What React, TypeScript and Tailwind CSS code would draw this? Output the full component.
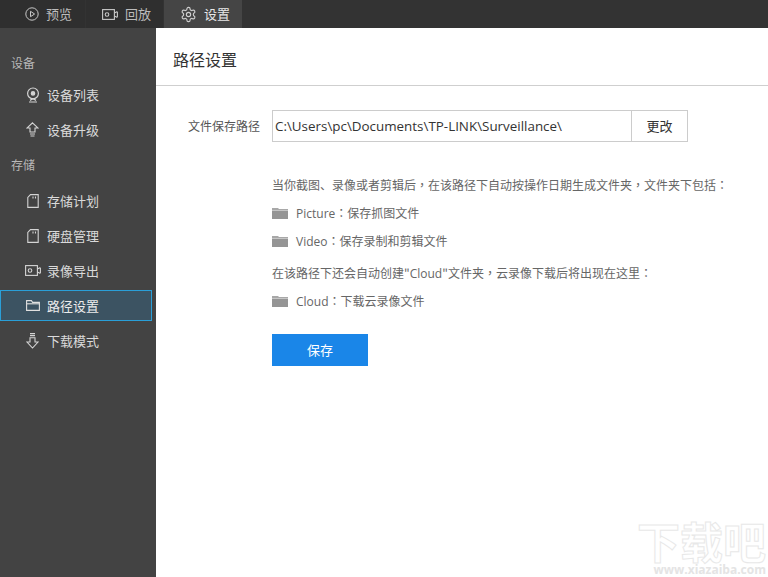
import React from "react";

const FONT = '"Noto Sans CJK SC", "Open Sans", sans-serif';

function Play() {
  return (
    <svg width="14" height="14" viewBox="0 0 14 14" fill="none" stroke="#c8c8c8" strokeWidth="1">
      <circle cx="7" cy="7" r="6.2" />
      <path d="M5.5 4.3 L9.6 7 L5.5 9.7 Z" />
    </svg>
  );
}
function Cam({ color = "#c8c8c8" }: { color?: string }) {
  return (
    <svg width="16" height="11" viewBox="0 0 16 11" fill="none" stroke={color} strokeWidth="1.1">
      <rect x="0.6" y="0.6" width="11.8" height="9.8" />
      <circle cx="5" cy="5.5" r="1.8" />
      <path d="M12.4 4 L15.4 2.4 M12.4 7 L15.4 8.6 M15.4 3v5" />
    </svg>
  );
}
function Gear() {
  return (
    <svg width="17" height="17" viewBox="0 0 24 24" fill="none" stroke="#d0d0d0" strokeWidth="1.6" strokeLinecap="round" strokeLinejoin="round">
      <path d="M12.22 2h-.44a2 2 0 0 0-2 2v.18a2 2 0 0 1-1 1.73l-.43.25a2 2 0 0 1-2 0l-.15-.08a2 2 0 0 0-2.73.73l-.22.38a2 2 0 0 0 .73 2.73l.15.1a2 2 0 0 1 1 1.72v.51a2 2 0 0 1-1 1.74l-.15.09a2 2 0 0 0-.73 2.73l.22.38a2 2 0 0 0 2.73.73l.15-.08a2 2 0 0 1 2 0l.43.25a2 2 0 0 1 1 1.73V20a2 2 0 0 0 2 2h.44a2 2 0 0 0 2-2v-.18a2 2 0 0 1 1-1.73l.43-.25a2 2 0 0 1 2 0l.15.08a2 2 0 0 0 2.73-.73l.22-.39a2 2 0 0 0-.73-2.73l-.15-.08a2 2 0 0 1-1-1.74v-.5a2 2 0 0 1 1-1.74l.15-.09a2 2 0 0 0 .73-2.73l-.22-.38a2 2 0 0 0-2.73-.73l-.15.08a2 2 0 0 1-2 0l-.43-.25a2 2 0 0 1-1-1.73V4a2 2 0 0 0-2-2z" />
      <circle cx="12" cy="12" r="3" />
    </svg>
  );
}
function Pin() {
  return (
    <svg width="14" height="16" viewBox="0 0 14 16" fill="none" stroke="#d4d4d4" strokeWidth="1.2">
      <circle cx="7" cy="6.4" r="5.4" />
      <circle cx="7" cy="6.4" r="1.7" fill="#d4d4d4" />
      <path d="M4 13.4 L7 11.8 L10 13.4 M3 15h8" />
    </svg>
  );
}
function Upgrade() {
  return (
    <svg width="13" height="15" viewBox="0 0 13 15" fill="none" stroke="#d4d4d4" strokeWidth="1.1">
      <path d="M6.5 0.8 L12 6 H9 V10 H4 V6 H1 Z" />
      <path d="M4 12 H9 M4.5 14 H8.5" />
    </svg>
  );
}
function Card() {
  return (
    <svg width="12" height="14" viewBox="0 0 12 14" fill="none" stroke="#d4d4d4" strokeWidth="1.1">
      <path d="M3.5 0.6 H11.2 V13.4 H0.8 V3.4 Z" />
      <path d="M6 2.6 V4.6 M8.5 2.6 V4.6" />
    </svg>
  );
}
function FolderLine() {
  return (
    <svg width="14" height="11" viewBox="0 0 14 11" fill="none" stroke="#e0e0e0" strokeWidth="1.1">
      <path d="M0.6 10.4 V0.6 H5.4 L6.6 2.4 H13.4 V10.4 Z" />
      <path d="M0.6 3.8 H13.4" />
    </svg>
  );
}
function Down() {
  return (
    <svg width="13" height="16" viewBox="0 0 13 16" fill="none" stroke="#d4d4d4" strokeWidth="1.1">
      <path d="M4 0.6 H9 M4 2.6 H9" />
      <path d="M4 4.8 H9 V9 H12 L6.5 15 L1 9 H4 Z" />
    </svg>
  );
}
function FolderFill() {
  return (
    <svg width="16" height="11" viewBox="0 0 16 11" fill="#959595">
      <path d="M0 0 H6 L7 1 H16 V2.4 H0 Z" fill="#a8a8a8" />
      <rect x="0" y="2.8" width="16" height="8.2" />
    </svg>
  );
}

function Tab({ w, active, icon, label, pad }: { w: string; active?: boolean; icon: React.ReactNode; label: string; pad: string }) {
  return (
    <div className={`${w} ${pad} flex h-full items-center gap-[7px] text-[13px] ${active ? "bg-[#454545] text-[#e8e8e8]" : "bg-[#2f2f2f] text-[#bcbcbc]"}`}>
      {icon}
      <span>{label}</span>
    </div>
  );
}

function Group({ label }: { label: string }) {
  return <div className="flex h-[35px] items-center pl-[11px] text-[12px] text-[#b8b8b8]">{label}</div>;
}

function Item({ icon, label, active }: { icon: React.ReactNode; label: string; active?: boolean }) {
  return (
    <div
      className={`flex h-[31px] w-[152px] items-center text-[13px] ${
        active ? "border border-[#2a9fd8] bg-[#3c5362] text-[#ececec]" : "border border-transparent text-[#dadada]"
      }`}
    >
      <div className="flex w-[45px] justify-center pl-[18px]">{icon}</div>
      <span className="ml-px">{label}</span>
    </div>
  );
}

function FolderRow({ name, label }: { name: string; label: string }) {
  return (
    <div className="flex h-[24px] items-center gap-[8px] text-[12px] text-[#666666]">
      <FolderFill />
      <span>
        <span className="font-['Open_Sans']">{name}</span>
        <span className="font-['Noto_Sans_CJK_TC']">：</span>
        {label}
      </span>
    </div>
  );
}

export default function App() {
  return (
    <div className="relative flex h-[577px] w-[768px] flex-col overflow-hidden bg-white" style={{ fontFamily: FONT }}>
      <div className="flex h-[28px] shrink-0 gap-px bg-[#333333]">
        <Tab w="w-[85px]" pad="pl-[25px]" icon={<Play />} label="预览" />
        <Tab w="w-[77px]" pad="pl-[16px]" icon={<Cam />} label="回放" />
        <Tab w="w-[78px]" pad="pl-[16px]" active icon={<Gear />} label="设置" />
      </div>
      <div className="flex min-h-0 flex-1">
        <aside className="flex w-[156px] shrink-0 flex-col bg-[#434343] pt-[17px]">
          <Group label="设备" />
          <div className="-mt-px flex flex-col gap-[4px] pb-[2px]">
            <Item icon={<Pin />} label="设备列表" />
            <Item icon={<Upgrade />} label="设备升级" />
          </div>
          <Group label="存储" />
          <div className="mt-[3px] flex flex-col gap-[4px]">
            <Item icon={<Card />} label="存储计划" />
            <Item icon={<Card />} label="硬盘管理" />
            <Item icon={<Cam color="#d4d4d4" />} label="录像导出" />
            <Item active icon={<FolderLine />} label="路径设置" />
            <Item icon={<Down />} label="下载模式" />
          </div>
        </aside>
        <main className="flex min-w-0 flex-1 flex-col">
          <div className="flex h-[58px] shrink-0 items-center border-b border-[#cfcfcf] pl-[17px] pt-[4px] text-[16px] text-[#333333]">路径设置</div>
          <div className="flex flex-col pt-[24px]">
            <div className="flex items-center">
              <div className="w-[104px] text-right text-[12px] text-[#555555]">文件保存路径</div>
              <div className="ml-[12px] flex h-[32px] w-[416px] border border-[#cccccc]">
                <div className="flex flex-1 items-center pl-[2px] pt-[1px] font-['Open_Sans'] text-[13.4px] text-[#333333]">C:\Users\pc\Documents\TP-LINK\Surveillance\</div>
                <div className="flex w-[56px] items-center justify-center border-l border-[#cccccc] text-[13px] text-[#333333]">更改</div>
              </div>
            </div>
            <div className="ml-[116px] flex flex-col pt-[31px]">
              <div className="flex h-[24px] items-center text-[12px] text-[#666666]">
                <span>
                  当你截图、录像或者剪辑后<span className="font-['Noto_Sans_CJK_TC']">，</span>在该路径下自动按操作日期生成文件夹<span className="font-['Noto_Sans_CJK_TC']">，</span>文件夹下包括<span className="font-['Noto_Sans_CJK_TC']">：</span>
                </span>
              </div>
              <div className="mt-[4px] flex flex-col gap-[4px]">
                <FolderRow name="Picture" label="保存抓图文件" />
                <FolderRow name="Video" label="保存录制和剪辑文件" />
              </div>
              <div className="mt-[8px] flex h-[24px] items-center text-[12px] text-[#666666]">
                <span>
                  在该路径下还会自动创建"<span className="font-['Open_Sans']">Cloud</span>"文件夹<span className="font-['Noto_Sans_CJK_TC']">，</span>云录像下载后将出现在这里<span className="font-['Noto_Sans_CJK_TC']">：</span>
                </span>
              </div>
              <div className="mt-[4px]">
                <FolderRow name="Cloud" label="下载云录像文件" />
              </div>
              <div className="mt-[21px] flex h-[32px] w-[96px] items-center justify-center bg-[#1a86e8] text-[13px] text-white">保存</div>
            </div>
          </div>
        </main>
      </div>
      <div className="absolute bottom-0 right-[2px] flex flex-col items-end">
        <div className="h-[44px] text-[43px] font-bold leading-[44px] text-white [-webkit-text-stroke:1px_#e8e8e8]">下载吧</div>
        <div className="h-[15px] font-['Open_Sans'] text-[12px] font-bold leading-[15px] text-[#e4e4e4]">www.xiazaiba.com</div>
      </div>
    </div>
  );
}
